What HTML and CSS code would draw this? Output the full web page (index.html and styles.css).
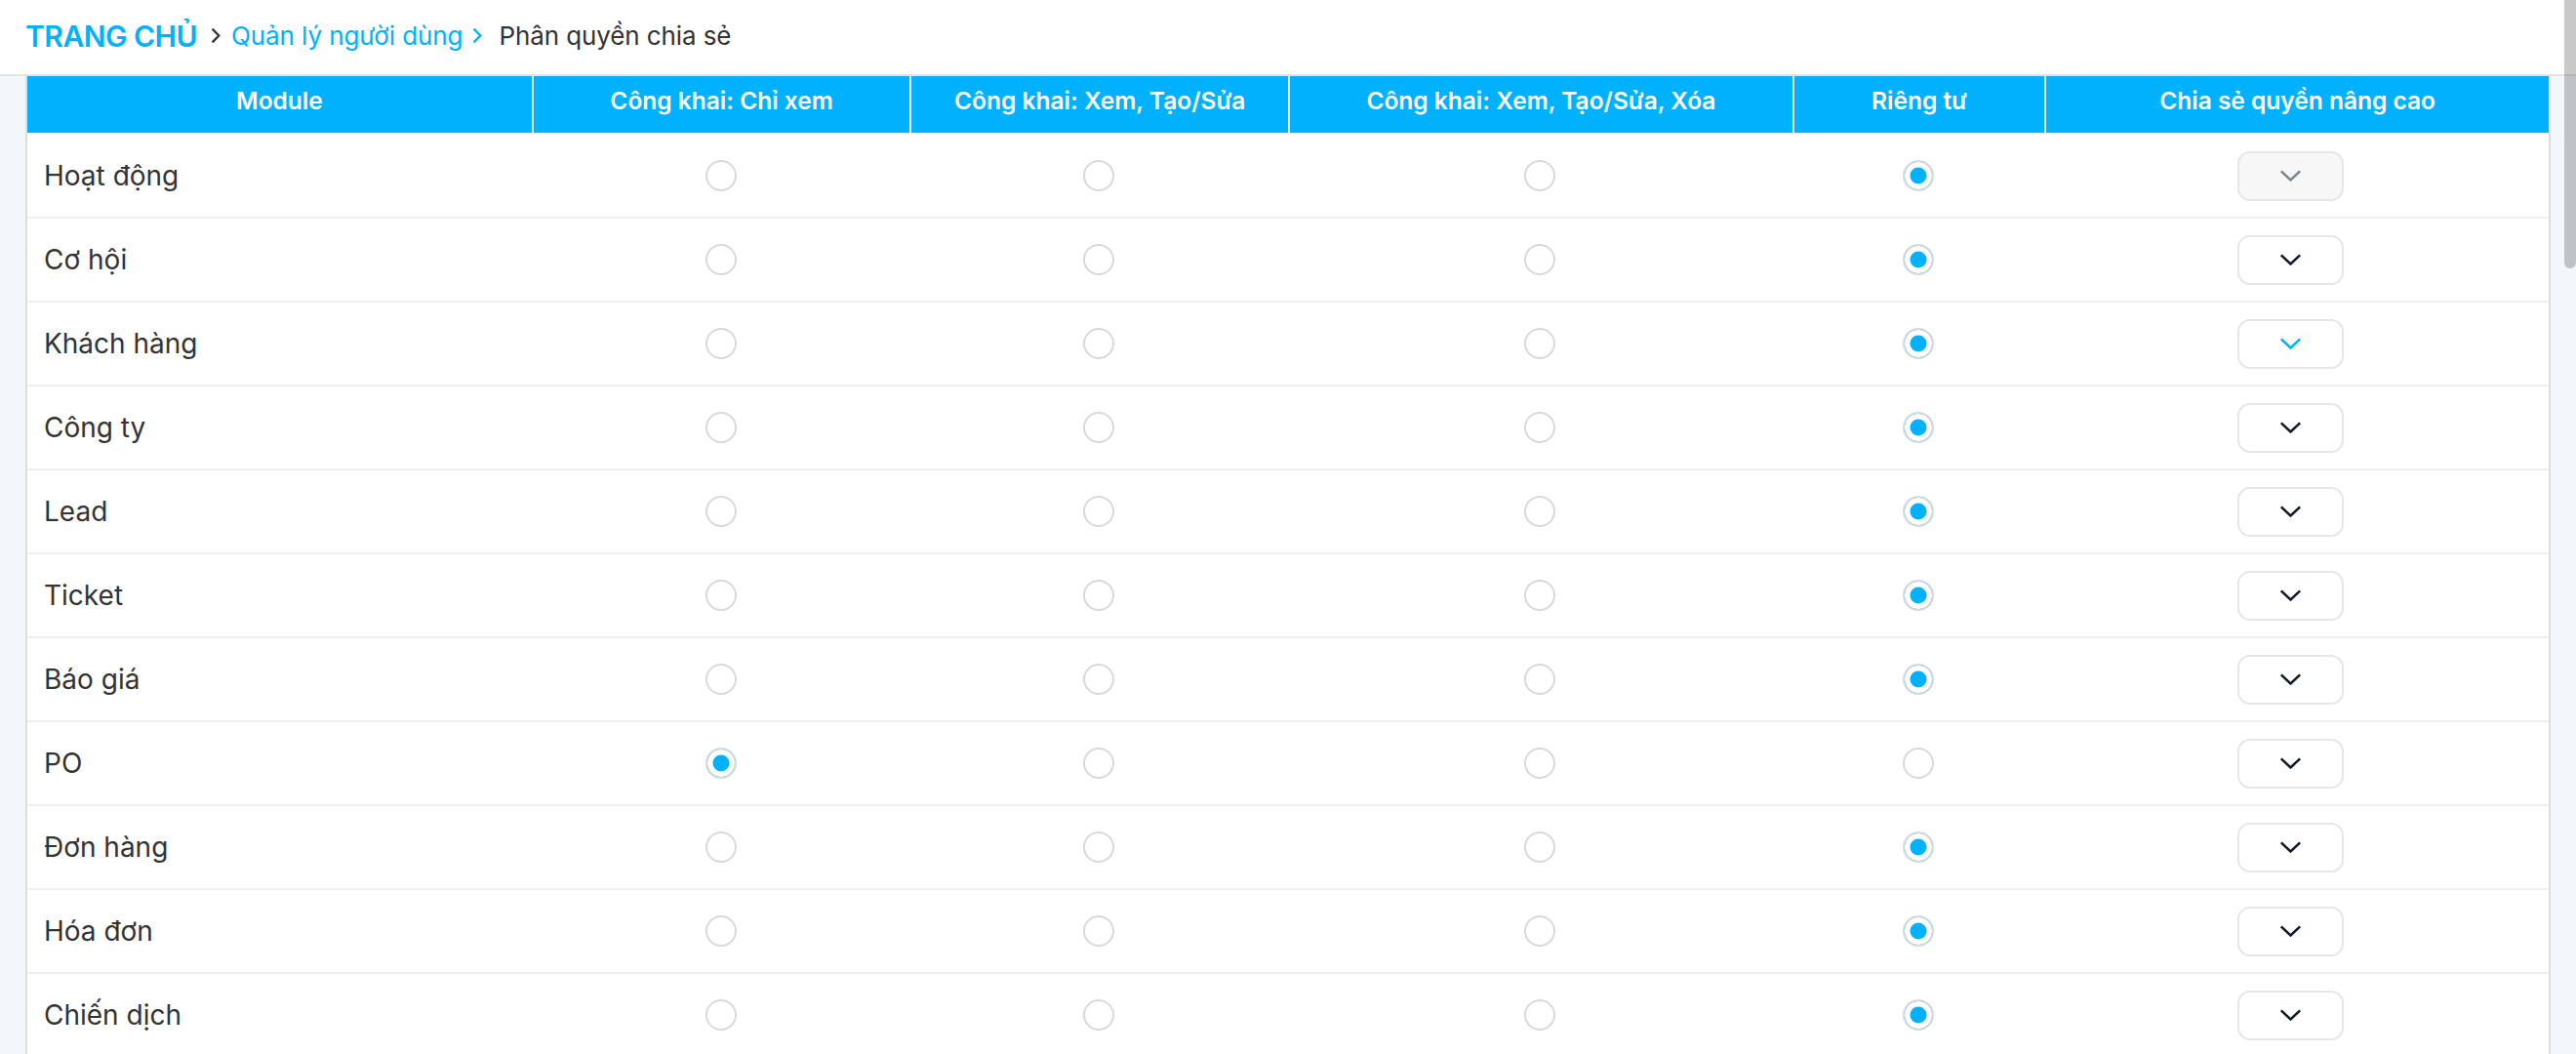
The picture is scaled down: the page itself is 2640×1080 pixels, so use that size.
FILE: index.html
```html
<!DOCTYPE html>
<html lang="vi">
<head>
<meta charset="utf-8">
<title>Phân quyền chia sẻ</title>
<link rel="stylesheet" href="styles.css">
</head>
<body>
<div class="app">
  <div class="page">
    <header class="topbar">
      <nav class="crumbs">
        <a class="crumb-home" href="#">TRANG CHỦ</a>
        <svg class="sep sep-dark" viewBox="0 0 10 17" width="10" height="17"><path d="M1.6 1.6 L8.3 8.5 L1.6 15.4" fill="none" stroke="currentColor" stroke-width="2.3"/></svg>
        <a class="crumb-link" href="#">Quản lý người dùng</a>
        <svg class="sep sep-blue" viewBox="0 0 10 17" width="10" height="17"><path d="M1.6 1.6 L8.3 8.5 L1.6 15.4" fill="none" stroke="currentColor" stroke-width="2.3"/></svg>
        <span class="crumb-current">Phân quyền chia sẻ</span>
      </nav>
    </header>
    <main class="content">
      <div class="table-wrap">
        <table class="perm">
          <colgroup>
            <col class="c-20"><col class="c-15"><col class="c-15"><col class="c-20"><col class="c-10"><col class="c-20">
          </colgroup>
          <thead>
            <tr>
              <th>Module</th>
              <th>Công khai: Chỉ xem</th>
              <th>Công khai: Xem, Tạo/Sửa</th>
              <th>Công khai: Xem, Tạo/Sửa, Xóa</th>
              <th>Riêng tư</th>
              <th>Chia sẻ quyền nâng cao</th>
            </tr>
          </thead>
          <tbody>
            <tr>
              <td class="name">Hoạt động</td>
              <td><input class="radio" type="radio" name="r1"></td>
              <td><input class="radio" type="radio" name="r1"></td>
              <td><input class="radio" type="radio" name="r1"></td>
              <td><input class="radio" type="radio" name="r1" checked></td>
              <td class="adv"><button class="dd dd-disabled" type="button" disabled><svg viewBox="0 0 24 13" width="23" height="12"><path d="M1.5 1.5 L12 11.3 L22.5 1.5" fill="none" stroke="currentColor" stroke-width="2.8"/></svg></button></td>
            </tr>
            <tr>
              <td class="name">Cơ hội</td>
              <td><input class="radio" type="radio" name="r2"></td>
              <td><input class="radio" type="radio" name="r2"></td>
              <td><input class="radio" type="radio" name="r2"></td>
              <td><input class="radio" type="radio" name="r2" checked></td>
              <td class="adv"><button class="dd" type="button"><svg viewBox="0 0 24 13" width="23" height="12"><path d="M1.5 1.5 L12 11.3 L22.5 1.5" fill="none" stroke="currentColor" stroke-width="2.8"/></svg></button></td>
            </tr>
            <tr>
              <td class="name">Khách hàng</td>
              <td><input class="radio" type="radio" name="r3"></td>
              <td><input class="radio" type="radio" name="r3"></td>
              <td><input class="radio" type="radio" name="r3"></td>
              <td><input class="radio" type="radio" name="r3" checked></td>
              <td class="adv"><button class="dd dd-active" type="button"><svg viewBox="0 0 24 13" width="23" height="12"><path d="M1.5 1.5 L12 11.3 L22.5 1.5" fill="none" stroke="currentColor" stroke-width="2.8"/></svg></button></td>
            </tr>
            <tr>
              <td class="name">Công ty</td>
              <td><input class="radio" type="radio" name="r4"></td>
              <td><input class="radio" type="radio" name="r4"></td>
              <td><input class="radio" type="radio" name="r4"></td>
              <td><input class="radio" type="radio" name="r4" checked></td>
              <td class="adv"><button class="dd" type="button"><svg viewBox="0 0 24 13" width="23" height="12"><path d="M1.5 1.5 L12 11.3 L22.5 1.5" fill="none" stroke="currentColor" stroke-width="2.8"/></svg></button></td>
            </tr>
            <tr>
              <td class="name">Lead</td>
              <td><input class="radio" type="radio" name="r5"></td>
              <td><input class="radio" type="radio" name="r5"></td>
              <td><input class="radio" type="radio" name="r5"></td>
              <td><input class="radio" type="radio" name="r5" checked></td>
              <td class="adv"><button class="dd" type="button"><svg viewBox="0 0 24 13" width="23" height="12"><path d="M1.5 1.5 L12 11.3 L22.5 1.5" fill="none" stroke="currentColor" stroke-width="2.8"/></svg></button></td>
            </tr>
            <tr>
              <td class="name">Ticket</td>
              <td><input class="radio" type="radio" name="r6"></td>
              <td><input class="radio" type="radio" name="r6"></td>
              <td><input class="radio" type="radio" name="r6"></td>
              <td><input class="radio" type="radio" name="r6" checked></td>
              <td class="adv"><button class="dd" type="button"><svg viewBox="0 0 24 13" width="23" height="12"><path d="M1.5 1.5 L12 11.3 L22.5 1.5" fill="none" stroke="currentColor" stroke-width="2.8"/></svg></button></td>
            </tr>
            <tr>
              <td class="name">Báo giá</td>
              <td><input class="radio" type="radio" name="r7"></td>
              <td><input class="radio" type="radio" name="r7"></td>
              <td><input class="radio" type="radio" name="r7"></td>
              <td><input class="radio" type="radio" name="r7" checked></td>
              <td class="adv"><button class="dd" type="button"><svg viewBox="0 0 24 13" width="23" height="12"><path d="M1.5 1.5 L12 11.3 L22.5 1.5" fill="none" stroke="currentColor" stroke-width="2.8"/></svg></button></td>
            </tr>
            <tr>
              <td class="name">PO</td>
              <td><input class="radio" type="radio" name="r8" checked></td>
              <td><input class="radio" type="radio" name="r8"></td>
              <td><input class="radio" type="radio" name="r8"></td>
              <td><input class="radio" type="radio" name="r8"></td>
              <td class="adv"><button class="dd" type="button"><svg viewBox="0 0 24 13" width="23" height="12"><path d="M1.5 1.5 L12 11.3 L22.5 1.5" fill="none" stroke="currentColor" stroke-width="2.8"/></svg></button></td>
            </tr>
            <tr>
              <td class="name">Đơn hàng</td>
              <td><input class="radio" type="radio" name="r9"></td>
              <td><input class="radio" type="radio" name="r9"></td>
              <td><input class="radio" type="radio" name="r9"></td>
              <td><input class="radio" type="radio" name="r9" checked></td>
              <td class="adv"><button class="dd" type="button"><svg viewBox="0 0 24 13" width="23" height="12"><path d="M1.5 1.5 L12 11.3 L22.5 1.5" fill="none" stroke="currentColor" stroke-width="2.8"/></svg></button></td>
            </tr>
            <tr>
              <td class="name">Hóa đơn</td>
              <td><input class="radio" type="radio" name="r10"></td>
              <td><input class="radio" type="radio" name="r10"></td>
              <td><input class="radio" type="radio" name="r10"></td>
              <td><input class="radio" type="radio" name="r10" checked></td>
              <td class="adv"><button class="dd" type="button"><svg viewBox="0 0 24 13" width="23" height="12"><path d="M1.5 1.5 L12 11.3 L22.5 1.5" fill="none" stroke="currentColor" stroke-width="2.8"/></svg></button></td>
            </tr>
            <tr>
              <td class="name">Chiến dịch</td>
              <td><input class="radio" type="radio" name="r11"></td>
              <td><input class="radio" type="radio" name="r11"></td>
              <td><input class="radio" type="radio" name="r11"></td>
              <td><input class="radio" type="radio" name="r11" checked></td>
              <td class="adv"><button class="dd" type="button"><svg viewBox="0 0 24 13" width="23" height="12"><path d="M1.5 1.5 L12 11.3 L22.5 1.5" fill="none" stroke="currentColor" stroke-width="2.8"/></svg></button></td>
            </tr>
          </tbody>
        </table>
      </div>
    </main>
  </div>
  <div class="rail" aria-hidden="true"><div class="thumb"></div></div>
</div>
</body>
</html>
```
FILE: styles.css
```css
html, body {
  margin: 0;
  padding: 0;
}

body {
  background: #f3f7fb;
  font-family: Inter, "Noto Sans", "Liberation Sans", sans-serif;
  color: #333333;
}

.app {
  display: flex;
  align-items: stretch;
  min-height: 100vh;
}

.page {
  flex: 1;
  min-width: 0;
}

.rail {
  flex: none;
  width: 12px;
  background: linear-gradient(#ffffff 0 76px, #e3e3e3 76px 78px, #f3f7fb 78px);
}

.thumb {
  height: 275px;
  background: rgba(0, 0, 0, 0.21);
  border-radius: 0 0 6px 6px;
}

.topbar {
  height: 73px;
  background: #ffffff;
  border-bottom: 2px solid #e3e3e3;
  display: flex;
  align-items: center;
  padding: 0 0 3px 26px;
}

.crumbs {
  display: flex;
  align-items: center;
}

.crumb-home {
  font-size: 30px;
  font-weight: 600;
  letter-spacing: -0.5px;
  color: #00b1fe;
  text-decoration: none;
}

.crumb-link {
  font-size: 26px;
  letter-spacing: -0.1px;
  color: #00b1fe;
  text-decoration: none;
}

.crumb-current {
  font-size: 26px;
  letter-spacing: -0.1px;
  color: #333333;
}

.sep {
  display: block;
  flex: none;
}

.sep-dark {
  color: #333333;
  margin: 0 11px 0 14px;
}

.sep-blue {
  color: #00b1fe;
  margin: 0 17px 0 10px;
}

.content {
  padding: 0 14px 0 26px;
}

.table-wrap {
  border-left: 2px solid #dddddd;
  border-right: 2px solid #dddddd;
  background: #ffffff;
}

.perm {
  width: 100%;
  border-collapse: separate;
  border-spacing: 0;
  table-layout: fixed;
}

.c-20 { width: 20%; }
.c-15 { width: 15%; }
.c-10 { width: 10%; }

.perm th {
  background: #00b1fe;
  color: #ffffff;
  font-size: 24.5px;
  font-weight: 600;
  line-height: 50px;
  padding: 0 0 8px;
  border-bottom: 2px solid #eef0f2;
  text-align: center;
  white-space: nowrap;
}

.perm th + th {
  border-left: 2px solid #eeeae6;
}

.perm td {
  height: 84px;
  padding: 0;
  border-bottom: 2px solid #efefef;
  text-align: center;
  vertical-align: middle;
  font-size: 28px;
  color: #333333;
}

.perm td.name {
  text-align: left;
  padding-left: 17px;
}

.perm td.adv {
  padding-right: 13px;
}

.radio {
  appearance: none;
  -webkit-appearance: none;
  display: block;
  margin: 0 auto;
  width: 32px;
  height: 32px;
  border: 2px solid #d9d9d9;
  border-radius: 50%;
  background: #ffffff;
  box-sizing: border-box;
}

.radio:checked {
  background: #00b1fe;
  box-shadow: inset 0 0 0 5.5px #ffffff;
}

.dd {
  display: flex;
  align-items: center;
  justify-content: center;
  margin: 0 auto;
  width: 109px;
  height: 51px;
  padding: 0;
  border: 2px solid #e6e6e6;
  border-radius: 13px;
  background: #ffffff;
  color: #0f1b2c;
  box-sizing: border-box;
}

.dd svg {
  display: block;
}

.dd-disabled {
  background: #f7f7f7;
  color: #7b8591;
}

.dd-active {
  color: #00b1fe;
}
```
